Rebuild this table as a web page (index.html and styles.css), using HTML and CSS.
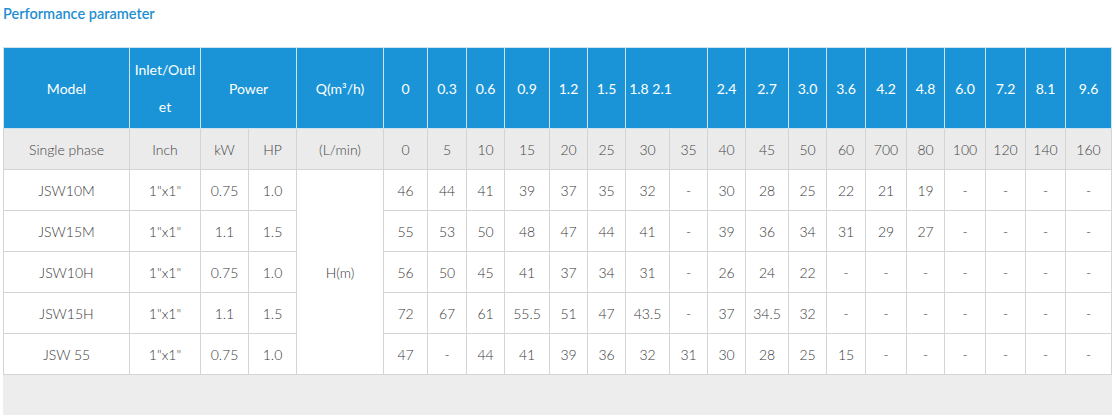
FILE: index.html
```html
<!DOCTYPE html>
<html>
<head>
<meta charset="utf-8">
<link rel="stylesheet" href="styles.css">
</head>
<body>
<div class="page">
  <h2 class="title">Performance parameter</h2>
  <div class="table-wrap">
    <table class="perf">
      <colgroup>
        <col style="width:126px"><col style="width:71px"><col style="width:48px"><col style="width:48px"><col style="width:87px">
        <col style="width:44px"><col style="width:39px"><col style="width:38px"><col style="width:45px"><col style="width:38px"><col style="width:38px">
        <col style="width:44px"><col style="width:38px"><col style="width:38px"><col style="width:43px"><col style="width:38px"><col style="width:39px">
        <col style="width:41px"><col style="width:38px"><col style="width:41px"><col style="width:40px"><col style="width:40px"><col style="width:46px">
      </colgroup>
      <thead>
        <tr class="head">
          <th>Model</th>
          <th class="wrap">Inlet/Outlet</th>
          <th colspan="2">Power</th>
          <th>Q(m³/h)</th>
          <th>0</th><th>0.3</th><th>0.6</th><th>0.9</th><th>1.2</th><th>1.5</th>
          <th colspan="2" class="pair">1.8 2.1</th>
          <th>2.4</th><th>2.7</th><th>3.0</th><th>3.6</th><th>4.2</th><th>4.8</th><th>6.0</th><th>7.2</th><th>8.1</th><th>9.6</th>
        </tr>
        <tr class="sub">
          <td>Single phase</td><td>Inch</td><td>kW</td><td>HP</td><td>(L/min)</td>
          <td>0</td><td>5</td><td>10</td><td>15</td><td>20</td><td>25</td><td>30</td><td>35</td><td>40</td><td>45</td><td>50</td><td>60</td><td>700</td><td>80</td><td>100</td><td>120</td><td>140</td><td>160</td>
        </tr>
      </thead>
      <tbody>
        <tr>
          <td>JSW10M</td><td>1"x1"</td><td>0.75</td><td>1.0</td><td rowspan="5">H(m)</td>
          <td>46</td><td>44</td><td>41</td><td>39</td><td>37</td><td>35</td><td>32</td><td>-</td><td>30</td><td>28</td><td>25</td><td>22</td><td>21</td><td>19</td><td>-</td><td>-</td><td>-</td><td>-</td>
        </tr>
        <tr>
          <td>JSW15M</td><td>1"x1"</td><td>1.1</td><td>1.5</td>
          <td>55</td><td>53</td><td>50</td><td>48</td><td>47</td><td>44</td><td>41</td><td>-</td><td>39</td><td>36</td><td>34</td><td>31</td><td>29</td><td>27</td><td>-</td><td>-</td><td>-</td><td>-</td>
        </tr>
        <tr>
          <td>JSW10H</td><td>1"x1"</td><td>0.75</td><td>1.0</td>
          <td>56</td><td>50</td><td>45</td><td>41</td><td>37</td><td>34</td><td>31</td><td>-</td><td>26</td><td>24</td><td>22</td><td>-</td><td>-</td><td>-</td><td>-</td><td>-</td><td>-</td><td>-</td>
        </tr>
        <tr>
          <td>JSW15H</td><td>1"x1"</td><td>1.1</td><td>1.5</td>
          <td>72</td><td>67</td><td>61</td><td>55.5</td><td>51</td><td>47</td><td>43.5</td><td>-</td><td>37</td><td>34.5</td><td>32</td><td>-</td><td>-</td><td>-</td><td>-</td><td>-</td><td>-</td><td>-</td>
        </tr>
        <tr>
          <td>JSW 55</td><td>1"x1"</td><td>0.75</td><td>1.0</td>
          <td>47</td><td>-</td><td>44</td><td>41</td><td>39</td><td>36</td><td>32</td><td>31</td><td>30</td><td>28</td><td>25</td><td>15</td><td>-</td><td>-</td><td>-</td><td>-</td><td>-</td><td>-</td>
        </tr>
      </tbody>
    </table>
    <div class="scroll-track"></div>
  </div>
</div>
</body>
</html>
```
FILE: styles.css
```css
html, body {
  margin: 0;
  padding: 0;
  background: #fff;
}
body {
  font-family: Lato, "Noto Sans", sans-serif;
}
.page {
  padding: 0 5px 0 3px;
}
.title {
  margin: 0;
  padding-top: 5px;
  height: 47px;
  box-sizing: border-box;
  font-size: 14.5px;
  font-weight: 600;
  color: #1f8fd1;
  line-height: 17px;
}
.table-wrap {
  width: 1109px;
}
.perf {
  width: 1109px;
  table-layout: fixed;
  border-collapse: collapse;
  border: 1px solid #d4d4d4;
}
.perf th, .perf td {
  border: 1px solid #d4d4d4;
  text-align: center;
  vertical-align: middle;
  padding: 0;
  font-size: 14px;
}
.perf th {
  background: #1a94d7;
  color: #fff;
  font-weight: 400;
  height: 80px;
  border-color: #cfe2ef;
}
.perf th.wrap {
  word-break: break-all;
  line-height: 37px;
  padding: 0 3px;
}
.perf th.pair {
  padding-right: 32px;
}
.perf td {
  height: 40px;
  color: #3a3a3a;
  font-weight: 300;
}
.perf .sub td {
  background: #ebebeb;
  color: #444;
}
.scroll-track {
  height: 40px;
  background: #ededed;
}
```
